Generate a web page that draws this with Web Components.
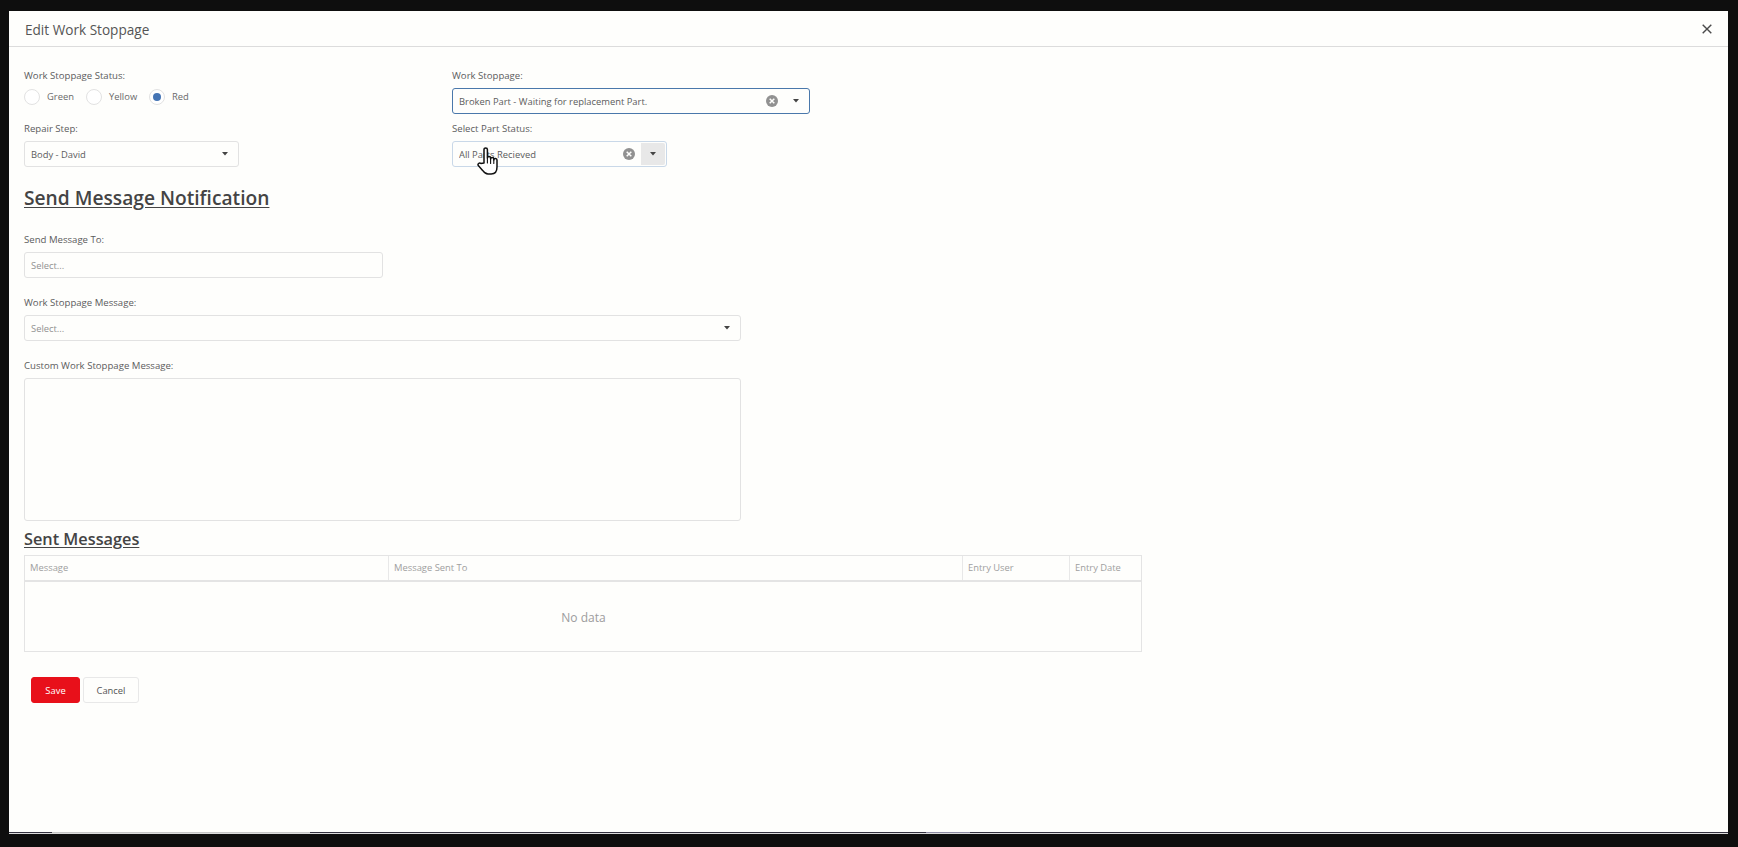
<!DOCTYPE html>
<html>
<head>
<meta charset="utf-8">
<title>Edit Work Stoppage</title>
<style>
html, body { margin: 0; height: 100%; background: #0e0e0e; overflow: hidden; }
body { padding: 11px 10px 13px 9px; box-sizing: border-box; font-family: "Open Sans", "Noto Sans", sans-serif; color: #4a4a4a; }
.row { display: grid; grid-template-columns: 428px 358px; }
.row.second { grid-template-columns: 215px 215px; column-gap: 213px; margin-top: 9px; }
.radios { display: flex; height: 25px; align-items: center; margin-top: -4px; }
.narrow { width: 359px; }
.wide { width: 717px; }
</style>
</head>
<body>
<ws-modal heading="Edit Work Stoppage">
  <div class="row">
    <ws-field label="Work Stoppage Status:">
      <div class="radios">
        <ws-radio gap="30">Green</ws-radio>
        <ws-radio gap="31">Yellow</ws-radio>
        <ws-radio checked>Red</ws-radio>
      </div>
    </ws-field>
    <ws-field label="Work Stoppage:">
      <ws-select value="Broken Part - Waiting for replacement Part." clearable focused></ws-select>
    </ws-field>
  </div>
  <div class="row second">
    <ws-field label="Repair Step:">
      <ws-select value="Body - David"></ws-select>
    </ws-field>
    <ws-field label="Select Part Status:">
      <ws-select value="All Parts Recieved" clearable hover>
        <ws-cursor></ws-cursor>
      </ws-select>
    </ws-field>
  </div>
  <ws-heading size="19.2" top="20" bottom="24">Send Message Notification</ws-heading>
  <ws-field class="narrow" label="Send Message To:">
    <ws-select placeholder="Select..." nocaret></ws-select>
  </ws-field>
  <ws-field class="wide" label="Work Stoppage Message:" style="margin-top:19px">
    <ws-select placeholder="Select..."></ws-select>
  </ws-field>
  <ws-field class="wide" label="Custom Work Stoppage Message:" style="margin-top:19px">
    <ws-textarea></ws-textarea>
  </ws-field>
  <ws-heading size="16.3" top="8" bottom="6">Sent Messages</ws-heading>
  <ws-grid></ws-grid>
  <div style="display:flex;gap:3px;margin:25px 0 0 7px">
    <ws-button primary>Save</ws-button>
    <ws-button>Cancel</ws-button>
  </div>
</ws-modal>

<script>
class WsModal extends HTMLElement {
  constructor() {
    super();
    this.attachShadow({ mode: 'open' });
  }
  connectedCallback() {
    this.shadowRoot.innerHTML = `
    <style>
    :host { display: flex; flex-direction: column; height: 100%; background: #fefefc; position: relative; box-sizing: border-box; border-bottom: 1px solid #dcdcdc; padding-bottom: 1px; }
    header { height: 36px; flex: none; display: flex; align-items: center; justify-content: space-between; padding: 1px 16px 0 16px; box-sizing: border-box; border-bottom: 1px solid #dcdcdc; }
    h2 { margin: 0; font-size: 13.6px; font-weight: 400; color: #555; }
    svg { display: block; }
    main { padding: 22px 15px 0; flex: 1; }
    .edge { position: absolute; left: 0; right: 0; bottom: 0; height: 1px; display: flex; }
    .edge i { background: #33313f; }
    .edge span { background: #c6c6c6; }
    .edge b { background: #8d8ba3; }
    </style>
    <header>
      <h2>${this.getAttribute('heading')}</h2>
      <svg width="10" height="10" viewBox="0 0 10 10"><path d="M.7.7l8.6 8.6M9.3.7L.7 9.3" stroke="#4a4a4a" stroke-width="1.4"/></svg>
    </header>
    <main><slot></slot></main>
    <div class="edge">
      <i style="width:43px"></i><span style="width:258px"></span><i style="width:616px"></i><b style="width:44px"></b><i style="flex:1"></i>
    </div>
    `;
  }
}

class WsField extends HTMLElement {
  constructor() {
    super();
    this.attachShadow({ mode: 'open' });
  }
  connectedCallback() {
    this.shadowRoot.innerHTML = `
    <style>
    :host { display: block; }
    label { display: block; font-size: 9.6px; line-height: 14px; height: 14px; margin-bottom: 5px; color: #5c5c5c; }
    </style>
    <label>${this.getAttribute('label')}</label>
    <slot></slot>
    `;
  }
}

class WsRadio extends HTMLElement {
  constructor() {
    super();
    this.attachShadow({ mode: 'open' });
  }
  connectedCallback() {
    const gap = this.getAttribute('gap');
    this.shadowRoot.innerHTML = `
    <style>
    :host { display: flex; align-items: center; font-size: 9.4px; color: #6a6a6a; ${gap ? `width: ${Number(gap) + 32}px;` : ''} }
    .dot { width: 16px; height: 16px; box-sizing: border-box; border: 1px solid #e2e2e2; border-radius: 50%; background: #fff; margin-right: 7px; display: flex; align-items: center; justify-content: center; }
    .dot i { width: 8px; height: 8px; border-radius: 50%; background: #4474b4; }
    </style>
    <span class="dot">${this.hasAttribute('checked') ? '<i></i>' : ''}</span><slot></slot>
    `;
  }
}

class WsSelect extends HTMLElement {
  constructor() {
    super();
    this.attachShadow({ mode: 'open' });
  }
  connectedCallback() {
    const value = this.getAttribute('value');
    const clear = this.hasAttribute('clearable') ? `
      <svg class="clear" width="12" height="12" viewBox="0 0 12 12"><circle cx="6" cy="6" r="6" fill="#919191"/><path d="M3.7 3.7l4.6 4.6M8.3 3.7L3.7 8.3" stroke="#fefefc" stroke-width="1.5"/></svg>` : '';
    const caret = this.hasAttribute('nocaret') ? '' : `
      <span class="btn"><svg width="6" height="3.5" viewBox="0 0 6 3.5"><path d="M0 0h6L3 3.5z" fill="#444"/></svg></span>`;
    this.shadowRoot.innerHTML = `
    <style>
    :host { display: block; position: relative; }
    .box { height: 26px; box-sizing: border-box; border: 1px solid #e2e2e2; border-radius: 3px; background: #fefefc; display: flex; align-items: center; padding: 1px 1px 1px 6px; font-size: 9.4px; color: #5c5c5c; margin-bottom: -1px; }
    :host([focused]) .box { border-color: #4a78ab; }
    :host([hover]) .box { border-color: #c9d8e8; }
    .text { flex: 1; white-space: nowrap; overflow: hidden; }
    .ph { color: #929292; }
    .clear { flex: none; margin-right: 6px; }
    .btn { flex: none; width: 24px; height: 100%; display: flex; align-items: center; justify-content: center; border-radius: 0 2px 2px 0; }
    :host([hover]) .btn { background: #e8e8e8; }
    </style>
    <div class="box">
      <span class="text ${value ? '' : 'ph'}">${value || this.getAttribute('placeholder')}</span>
      ${clear}${caret}
    </div>
    <slot></slot>
    `;
  }
}

class WsCursor extends HTMLElement {
  constructor() {
    super();
    this.attachShadow({ mode: 'open' });
  }
  connectedCallback() {
    this.shadowRoot.innerHTML = `
    <style>
    :host { position: absolute; left: 25px; top: 6px; width: 22px; height: 28px; }
    svg { display: block; }
    </style>
    <svg width="22" height="28" viewBox="0 0 22 28" fill="#fff" stroke="#111" stroke-width="1.5" stroke-linejoin="round" stroke-linecap="round">
      <path d="M7 16V2.6a1.7 1.7 0 0 1 3.4 0V11a1.6 1.6 0 0 1 3.2 0v1a1.6 1.6 0 0 1 3.2 0v1a1.6 1.6 0 0 1 3.2 .3V20c0 4.2-2.2 7-5.8 7h-3.2c-2.6 0-3.8-1.4-5.4-3.6L1.3 18.6c-1-1.6 1-3.4 2.6-2.2z"/>
      <path d="M10.4 11v5M13.6 12v4.5M16.8 13v3.5" fill="none" stroke-width="1.1"/>
    </svg>
    `;
  }
}

class WsTextarea extends HTMLElement {
  constructor() {
    super();
    this.attachShadow({ mode: 'open' });
  }
  connectedCallback() {
    this.shadowRoot.innerHTML = `
    <style>
    :host { display: block; height: 143px; box-sizing: border-box; border: 1px solid #e2e2e2; border-radius: 3px; background: #fefefc; }
    </style>
    `;
  }
}

class WsHeading extends HTMLElement {
  constructor() {
    super();
    this.attachShadow({ mode: 'open' });
  }
  connectedCallback() {
    const size = this.getAttribute('size');
    this.shadowRoot.innerHTML = `
    <style>
    :host { display: block; margin: ${this.getAttribute('top')}px 0 ${this.getAttribute('bottom')}px; font-size: ${size}px; line-height: ${Math.round(size) + 4}px; font-weight: 600; color: #444; text-decoration: underline; text-underline-offset: 2px; }
    </style>
    <slot></slot>
    `;
  }
}

class WsGrid extends HTMLElement {
  constructor() {
    super();
    this.attachShadow({ mode: 'open' });
  }
  connectedCallback() {
    this.shadowRoot.innerHTML = `
    <style>
    :host { display: block; width: 1118px; box-sizing: border-box; border: 1px solid #e4e4e4; background: #fefefc; }
    .head { display: grid; grid-template-columns: 363px 574px 107px 1fr; height: 24px; border-bottom: 2px solid #e4e4e4; box-sizing: content-box; }
    .head div { font-size: 9.4px; line-height: 24px; padding-left: 5px; color: #a0a0a0; border-left: 1px solid #e8e8e8; overflow: hidden; white-space: nowrap; }
    .head div:first-child { border-left: 0; }
    .empty { height: 69px; padding: 1px 0 0 1px; box-sizing: border-box; display: flex; align-items: center; justify-content: center; font-size: 12px; color: #9c9c9c; }
    </style>
    <div class="head">
      <div>Message</div><div>Message Sent To</div><div>Entry User</div><div>Entry Date</div>
    </div>
    <div class="empty">No data</div>
    `;
  }
}

class WsButton extends HTMLElement {
  constructor() {
    super();
    this.attachShadow({ mode: 'open' });
  }
  connectedCallback() {
    this.shadowRoot.innerHTML = `
    <style>
    :host { display: flex; align-items: center; justify-content: center; height: 26px; width: 56px; box-sizing: border-box; border: 1px solid #e8e8e8; border-radius: 3px; font-size: 9.4px; color: #555; background: #fefefc; }
    :host([primary]) { width: 49px; background: #e8101a; border-color: #e8101a; color: #fff; }
    </style>
    <slot></slot>
    `;
  }
}

customElements.define('ws-modal', WsModal);
customElements.define('ws-field', WsField);
customElements.define('ws-radio', WsRadio);
customElements.define('ws-select', WsSelect);
customElements.define('ws-cursor', WsCursor);
customElements.define('ws-textarea', WsTextarea);
customElements.define('ws-heading', WsHeading);
customElements.define('ws-grid', WsGrid);
customElements.define('ws-button', WsButton);
</script>
</body>
</html>
